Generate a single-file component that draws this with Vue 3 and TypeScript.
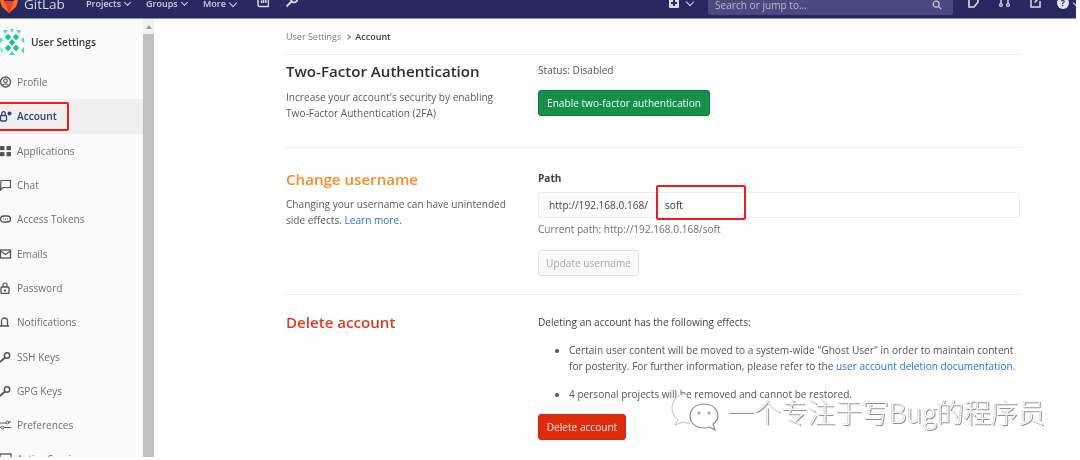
<script setup lang="ts">
interface NavItem { label: string; icon: string; active?: boolean }
const items: NavItem[] = [
  { label: 'Profile', icon: 'profile' },
  { label: 'Account', icon: 'account', active: true },
  { label: 'Applications', icon: 'apps' },
  { label: 'Chat', icon: 'chat' },
  { label: 'Access Tokens', icon: 'token' },
  { label: 'Emails', icon: 'mail' },
  { label: 'Password', icon: 'lock' },
  { label: 'Notifications', icon: 'bell' },
  { label: 'SSH Keys', icon: 'key' },
  { label: 'GPG Keys', icon: 'key' },
  { label: 'Preferences', icon: 'prefs' },
  { label: 'Active Sessions', icon: 'monitor' },
]
const darkCells: [number, number][] = [[8, 9], [16, 9], [12, 14.5], [8, 20], [16, 20]]
const diamond = (c: [number, number]) =>
  `${c[0]},${c[1] - 3.4} ${c[0] + 3.2},${c[1]} ${c[0]},${c[1] + 3.4} ${c[0] - 3.2},${c[1]}`
</script>

<template>
  <div class="page">
    <header class="topbar">
      <div class="topbar-row">
        <svg class="tanuki" viewBox="0 0 18 18" width="18" height="18">
          <path d="M9 18 2 12 0 6l2-5 2 5h10l2-5 2 5-2 6z" fill="#fc6d26" />
          <path d="M9 18 4 6h10z" fill="#e24329" />
        </svg>
        <span class="brand">GitLab</span>
        <span class="menu m1">Projects <i class="chev"></i></span>
        <span class="menu m2">Groups <i class="chev"></i></span>
        <span class="menu m3">More <i class="chev big"></i></span>
        <svg class="ticon" viewBox="0 0 12 14" width="12" height="14">
          <path d="M1 1v9.500a2 2 0 0 0 2 2h8.500V1M4.500 9V6.500M6.500 9V3.500M8.800 9V5.500" fill="none" stroke="#d6d6ea" stroke-width="1.500" />
        </svg>
        <svg class="ticon t2" viewBox="0 0 13 14" width="13" height="14">
          <path d="M1.500 12.500 6.500 7.500M5.500 5.500a3.500 3.500 0 0 1 5-4L8.500 4l1 1 2.500-2a3.500 3.500 0 0 1-4.500 5z" fill="none" stroke="#d6d6ea" stroke-width="1.900" />
        </svg>
        <span class="spacer"></span>
        <span class="plus">
          <svg viewBox="0 0 10 10" width="10" height="10"><path d="M1 0h8a1 1 0 0 1 1 1v8a1 1 0 0 1-1 1H1a1 1 0 0 1-1-1V1a1 1 0 0 1 1-1zM4 2v2H2v2h2v2h2V6h2V4H6V2z" fill="#dcdcec" fill-rule="evenodd" /></svg>
          <i class="chev big"></i>
        </span>
        <div class="search">
          <span>Search or jump to...</span>
          <svg viewBox="0 0 12 12" width="10" height="10"><circle cx="5" cy="5" r="3.600" fill="none" stroke="#c9c9de" stroke-width="1.400" /><path d="M8 8l3 3" stroke="#c9c9de" stroke-width="1.500" /></svg>
        </div>
        <svg class="ticon r1" viewBox="0 0 11 14" width="11" height="14"><path d="M1 1h9v7l-4 5H1z" fill="none" stroke="#dcdcec" stroke-width="1.600" /></svg>
        <svg class="ticon r2" viewBox="0 0 11 14" width="11" height="14"><circle cx="2" cy="3" r="1.400" fill="none" stroke="#dcdcec" stroke-width="1.200" /><circle cx="2" cy="11" r="1.400" fill="none" stroke="#dcdcec" stroke-width="1.200" /><circle cx="9" cy="11" r="1.400" fill="none" stroke="#dcdcec" stroke-width="1.200" /><path d="M2 4.500v5M9 9.500V3H6" fill="none" stroke="#dcdcec" stroke-width="1.400" /></svg>
        <svg class="ticon r3" viewBox="0 0 11 14" width="11" height="14"><path d="M6 3H1v10h9V7M4.500 8.500l6-6" fill="none" stroke="#dcdcec" stroke-width="1.500" /></svg>
        <span class="help">?</span>
        <i class="chev big help-chev"></i>
      </div>
    </header>

    <div class="body">
      <aside class="side">
        <div class="side-head">
          <svg class="identicon" viewBox="0 0 24 29" width="24" height="29">
            <path d="M3 2h5L5 6zM16 2h5l-2 4zM0 9l3 3-3 3zM24 9v6l-3-3zM0 19l3 3-1 4zM24 19v7l-3-4zM9 27l3-4 3 4zM10 1h4l-2 4z" fill="#46dfae" />
            <polygon v-for="(c, i) in darkCells" :key="i" :points="diamond(c)" fill="#1cc48a" />
          </svg>
          <span>User Settings</span>
        </div>
        <nav class="side-nav">
          <a v-for="it in items" :key="it.label" class="side-item" :class="{ active: it.active }">
            <svg class="side-icon" viewBox="0 0 12 12" width="12" height="12">
              <template v-if="it.icon === 'profile'">
                <circle cx="5.500" cy="6" r="5" fill="none" stroke="currentColor" stroke-width="1.300" />
                <circle cx="5.500" cy="4.800" r="1.800" fill="none" stroke="currentColor" stroke-width="1.200" />
                <path d="M2.500 9.500c1-2 5-2 6 0" fill="none" stroke="currentColor" stroke-width="1.200" />
              </template>
              <template v-else-if="it.icon === 'account'">
                <rect x=".5" y="5.500" width="6" height="5.500" rx="1" fill="none" stroke="currentColor" stroke-width="1.300" />
                <path d="M1.800 5.500V3a1.800 1.800 0 0 1 3.500 0v2.500" fill="none" stroke="currentColor" stroke-width="1.200" />
                <circle cx="9.500" cy="3.500" r="2" fill="currentColor" />
              </template>
              <template v-else-if="it.icon === 'apps'">
                <rect x="0" y="1" width="4.500" height="4.200" rx=".8" fill="currentColor" />
                <rect x="6.500" y="1" width="4.500" height="4.200" rx=".8" fill="currentColor" />
                <rect x="0" y="7" width="4.500" height="4.200" rx=".8" fill="currentColor" />
                <rect x="6.500" y="7" width="4.500" height="4.200" rx=".8" fill="currentColor" />
              </template>
              <template v-else-if="it.icon === 'chat'">
                <path d="M1 1.500h9.500v7H3L.5 11z" fill="none" stroke="currentColor" stroke-width="1.200" />
              </template>
              <template v-else-if="it.icon === 'token'">
                <rect x=".5" y="3" width="10" height="6" rx="3" fill="none" stroke="currentColor" stroke-width="1.300" />
                <path d="M3 6h5" stroke="currentColor" stroke-width="1.200" stroke-dasharray="1 1" />
              </template>
              <template v-else-if="it.icon === 'mail'">
                <rect x=".5" y="2" width="10" height="8" fill="none" stroke="currentColor" stroke-width="1.300" />
                <path d="M.5 3l5 3.500 5-3.500" fill="none" stroke="currentColor" stroke-width="1.300" />
              </template>
              <template v-else-if="it.icon === 'lock'">
                <rect x="1" y="5" width="8" height="6.500" rx="1" fill="none" stroke="currentColor" stroke-width="1.300" />
                <path d="M3 5V3a2 2 0 0 1 4 0v2" fill="none" stroke="currentColor" stroke-width="1.200" />
                <rect x="4" y="7.500" width="2" height="2" fill="currentColor" />
              </template>
              <template v-else-if="it.icon === 'bell'">
                <path d="M0 10h9M1.500 10V5a3 3 0 0 1 6 0v5" fill="none" stroke="currentColor" stroke-width="1.300" />
              </template>
              <template v-else-if="it.icon === 'key'">
                <circle cx="7" cy="4.500" r="2.700" fill="none" stroke="currentColor" stroke-width="1.500" />
                <path d="M5 6.500 0 11" stroke="currentColor" stroke-width="1.700" />
              </template>
              <template v-else-if="it.icon === 'prefs'">
                <path d="M0 4h6M8 3h3M4 8.500h7M0 8.500h1" stroke="currentColor" stroke-width="1.200" />
                <circle cx="7.500" cy="3.500" r="1.400" fill="none" stroke="currentColor" stroke-width="1" />
                <circle cx="2.500" cy="8.500" r="1.400" fill="none" stroke="currentColor" stroke-width="1" />
              </template>
              <template v-else>
                <rect x="0" y="1" width="11" height="8" fill="none" stroke="currentColor" stroke-width="1.300" />
              </template>
            </svg>
            <span>{{ it.label }}</span>
          </a>
        </nav>
      </aside>
      <div class="scrollbar">
        <span class="arrow"></span>
        <span class="thumb"></span>
      </div>

      <main class="content">
        <div class="crumbs">
          <span>User Settings</span>
          <i class="crumb-sep"></i>
          <b>Account</b>
        </div>

        <section class="row first">
          <div class="left">
            <h4>Two-Factor Authentication</h4>
            <p>Increase your account's security by enabling Two-Factor Authentication (2FA)</p>
          </div>
          <div class="right">
            <div class="status">Status: Disabled</div>
            <button class="btn green">Enable two-factor authentication</button>
          </div>
        </section>

        <section class="row second">
          <div class="left">
            <h4 class="orange">Change username</h4>
            <p>Changing your username can have unintended side effects. <a class="link">Learn more.</a></p>
          </div>
          <div class="right">
            <label class="path">Path</label>
            <div class="group">
              <span class="addon">http://192.168.0.168/</span>
              <span class="field">soft</span>
            </div>
            <div class="hint">Current path: http://192.168.0.168/soft</div>
            <button class="btn disabled">Update username</button>
          </div>
        </section>

        <section class="row third">
          <div class="left">
            <h4 class="red">Delete account</h4>
          </div>
          <div class="right">
            <p class="effects">Deleting an account has the following effects:</p>
            <ul>
              <li>Certain user content will be moved to a system-wide "Ghost User" in order to maintain content for posterity. For further information, please refer to the <a class="link">user account deletion documentation.</a></li>
              <li>4 personal projects will be removed and cannot be restored.</li>
            </ul>
            <button class="btn danger">Delete account</button>
          </div>
        </section>
      </main>
    </div>

    <span class="mark mark-account"></span>
    <span class="mark mark-soft"></span>

    <div class="watermark">
      <svg viewBox="0 0 50 40" width="50" height="40">
        <path d="M16 2C8 2 2 8 2 16c0 5 2 9 6 12l-3 5 8-3c2 1 4 1 7 1" fill="#fff" stroke="#bdbdbd" stroke-width="1" />
        <path d="M34 12c-8 0-14 5-14 12s6 12 14 12c2 0 3 0 5-1l6 3-2-6c3-2 5-5 5-8 0-7-6-12-14-12z" fill="#fff" stroke="#8c8c8c" stroke-width="1.200" />
        <circle cx="29" cy="21" r="1.500" fill="#a0a0a0" />
        <circle cx="39" cy="21" r="1.500" fill="#a0a0a0" />
      </svg>
      <span class="wm-text">一个专注于写Bug的程序员</span>
    </div>
  </div>
</template>

<style>
html, body { margin: 0; background: #fff; }
</style>

<style scoped>
.page {
  position: relative;
  width: 1080px;
  height: 460px;
  overflow: hidden;
  background: #fff;
  color: #3f3f3f;
  font-family: "Open Sans", "Noto Sans", sans-serif;
  font-size: 10.100px;
  filter: blur(0.45px);
}
.topbar {
  width: 1076px;
  height: 19px;
  background: #292961;
  border-bottom: 1px solid #8e8eae;
  box-sizing: border-box;
  overflow: hidden;
}
.topbar-row {
  display: flex;
  align-items: center;
  height: 7px;
  color: #d6d6ea;
}
.tanuki { flex: none; }
.brand { margin-left: 6px; font-size: 13.500px; color: #d8d8e8; width: 62px; }
.menu { display: inline-flex; align-items: center; gap: 4px; font-size: 9px; font-weight: 600; color: #cfcfe8; }
.m1 { width: 60px; }
.m2 { width: 57px; }
.m3 { width: 54px; }
.chev {
  display: inline-block;
  width: 4px;
  height: 4px;
  border-right: 1.300px solid currentColor;
  border-bottom: 1.300px solid currentColor;
  transform: translateY(-1px) rotate(45deg);
}
.chev.big { width: 5px; height: 5px; }
.ticon { flex: none; margin-top: -6px; }
.t2 { margin-left: 16px; }
.spacer { flex: 1; }
.plus { display: inline-flex; align-items: center; gap: 8px; margin-right: 15px; margin-top: -1px; }
.search {
  width: 245px;
  height: 26px;
  margin-top: -4px;
  padding: 6px 11px 0 7px;
  box-sizing: border-box;
  display: flex;
  justify-content: space-between;
  align-items: center;
  background: #4a4a80;
  border-radius: 3px;
  color: #b8b8d4;
  flex: none;
}
.r1 { margin-left: 15px; }
.r2 { margin-left: 20px; }
.r3 { margin-left: 20px; }
.help {
  margin-left: 16px;
  margin-top: -2px;
  width: 12px;
  height: 12px;
  border-radius: 50%;
  background: #e4e4f0;
  color: #292961;
  font-size: 9px;
  font-weight: 700;
  line-height: 12px;
  text-align: center;
  flex: none;
}
.help-chev { margin-left: 5px; margin-right: -4px; flex: none; }
.body { display: flex; height: 438px; }
.side {
  width: 143px;
  flex: none;
  background: #fafafa;
  overflow: hidden;
}
.side-head {
  height: 46px;
  display: flex;
  align-items: center;
  gap: 7px;
  font-size: 10.200px;
  font-weight: 600;
  color: #38383c;
  box-sizing: border-box;
}
.identicon { flex: none; }
.side-nav { display: flex; flex-direction: column; }
.side-item {
  display: flex;
  align-items: center;
  gap: 5px;
  height: 34.300px;
  flex: none;
  color: #707070;
  font-size: 10.100px;
}
.side-item.active { background: #efefef; color: #3a3a78; font-weight: 600; }
.side-icon { flex: none; color: #555; }
.side-item.active .side-icon { color: #3a3a78; }
.scrollbar {
  width: 11px;
  flex: none;
  background: #f1f1f1;
  display: flex;
  flex-direction: column;
  align-items: center;
}
.arrow {
  margin-top: 6px;
  border: 3px solid transparent;
  border-top-width: 0;
  border-bottom: 4px solid #9c9c9c;
}
.thumb { margin-top: 5px; width: 100%; flex: 1; background: #c1c1c1; }
.content {
  margin-left: 132px;
  width: 734px;
  flex: none;
}
.crumbs {
  height: 35px;
  display: flex;
  align-items: center;
  gap: 5px;
  font-size: 9px;
  color: #7a7a7a;
  border-bottom: 1px solid #eeeeee;
}
.crumbs b { color: #3a3a3a; font-weight: 600; }
.crumb-sep {
  width: 3px;
  height: 3px;
  border-top: 1px solid #777;
  border-right: 1px solid #777;
  transform: rotate(45deg);
}
.row {
  display: grid;
  grid-template-columns: 252px 1fr;
  box-sizing: border-box;
  border-bottom: 1px solid #eeeeee;
}
.first { height: 93px; padding-top: 5px; }
.second { height: 147px; padding-top: 22px; }
.third { border-bottom: 0; padding-top: 18px; }
h4 {
  margin: 0;
  font-size: 15.100px;
  line-height: 22px;
  font-weight: 600;
  color: #2e2e2e;
}
h4.orange { color: #fc8a26; margin-top: -2px; }
h4.red { color: #db3b21; margin-top: -2px; }
p { margin: 0; }
.left p {
  margin-top: 7px;
  width: 224px;
  line-height: 16px;
  color: #5c5c5c;
}
.second .left p { margin-top: 6px; }
.status { line-height: 20px; color: #555; }
.btn {
  display: block;
  box-sizing: border-box;
  height: 26px;
  padding: 0;
  border-radius: 3px;
  font-family: inherit;
  font-size: 10.100px;
  white-space: nowrap;
  border: 1px solid transparent;
}
.green { margin-top: 10px; background: #168f48; color: #f2fff6; border-color: #12753a; width: 172px; }
.path { display: block; font-weight: 700; line-height: 16px; color: #404040; }
.group { display: flex; height: 26px; margin-top: 6px; }
.addon {
  width: 119px;
  box-sizing: border-box;
  flex: none;
  padding-left: 10px;
  display: flex;
  align-items: center;
  background: #fafafa;
  border: 1px solid #ececec;
  border-right: 0;
  border-radius: 3px 0 0 3px;
  color: #4a4a4a;
}
.field {
  flex: 1;
  display: flex;
  align-items: center;
  padding-left: 7px;
  border: 1px solid #ececec;
  border-radius: 0 3px 3px 0;
  color: #333;
}
.hint { margin-top: 3px; line-height: 16px; color: #707070; }
.disabled {
  margin-top: 13px;
  width: 101px;
  background: #f9f9f9;
  border-color: #e2e2e2;
  color: #a8a8a8;
}
.link { color: #1f78d1; }
.effects { line-height: 16px; color: #444; margin-top: 1px; }
ul { margin: 12px 0 0; padding: 0 0 0 31px; line-height: 16px; color: #555; }
li { margin-bottom: 12px; }
.danger { margin-top: 0; width: 88px; background: #dd2b0e; border-color: #d0290c; color: #fde8e4; }
.mark {
  position: absolute;
  box-sizing: border-box;
  border: 2px solid #f11d1d;
  border-radius: 2px;
}
.mark-account { left: -4px; top: 102px; width: 73px; height: 29px; }
.mark-soft { left: 656px; top: 185px; width: 90px; height: 35px; }
.watermark {
  position: absolute;
  left: 670px;
  top: 392px;
  display: flex;
  align-items: center;
  gap: 7px;
}
.wm-text {
  font-family: "Noto Sans CJK SC", sans-serif;
  font-size: 27px;
  font-weight: 300;
  line-height: 40px;
  color: #f8f8f8;
  text-shadow: 1px 1px 0 #939393, -0.500px -0.500px 0 #c4c4c4;
  white-space: nowrap;
}
</style>
